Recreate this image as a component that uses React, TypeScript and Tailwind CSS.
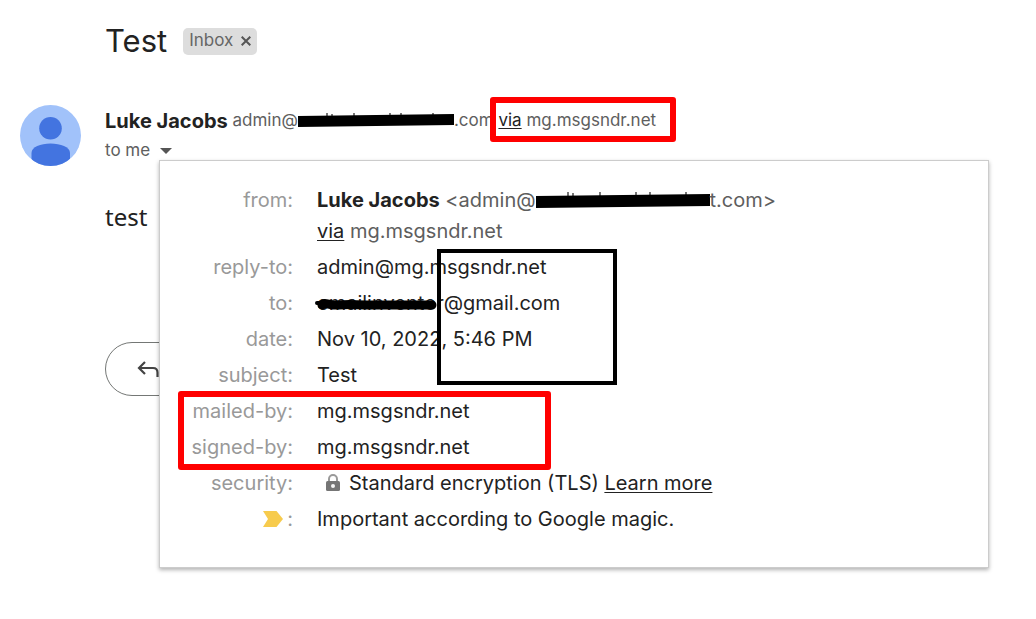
import type { ReactNode } from 'react';

const details: Array<{ label: string; value: ReactNode }> = [
  { label: 'reply-to:', value: 'admin@mg.msgsndr.net' },
  {
    label: 'to:',
    value: (
      <span className="relative">
        emailinventor@gmail.com
        <Marker className="absolute -left-0.5 top-1.5 h-4 w-[123px]">
          <path d="M2 6H14M6 8C30 6 60 8 118 7" strokeWidth="4" />
          <path d="M7 8C10 4 14 9 24 8S40 8 60 8S96 8 117 8" strokeWidth="9" />
        </Marker>
      </span>
    )
  },
  { label: 'date:', value: 'Nov 10, 2022, 5:46 PM' },
  { label: 'subject:', value: 'Test' },
  { label: 'mailed-by:', value: 'mg.msgsndr.net' },
  { label: 'signed-by:', value: 'mg.msgsndr.net' },
  {
    label: 'security:',
    value: (
      <span className="flex items-center">
        <LockIcon />
        <span>
          Standard encryption (TLS){' '}
          <a href="#learn-more" className="underline decoration-1 underline-offset-2">
            Learn more
          </a>
        </span>
      </span>
    )
  }
];

function Marker({ className, children }: { className: string; children: ReactNode }) {
  return (
    <svg className={className} fill="none" stroke="#000" strokeLinecap="round" aria-hidden="true">
      {children}
    </svg>
  );
}

function LockIcon() {
  return (
    <svg className="ml-2 mr-2 h-[18px] w-4 shrink-0" viewBox="0 0 16 18" aria-hidden="true">
      <path d="M4 8V5a4 4 0 0 1 8 0v3" fill="none" stroke="#9a9a9a" strokeWidth="2" />
      <rect x="1" y="7" width="14" height="10" rx="1.5" fill="#757575" />
      <circle cx="8" cy="12" r="2" fill="#f5f5f5" />
    </svg>
  );
}

function Avatar() {
  return (
    <svg className="size-[61px] shrink-0" viewBox="0 0 61 61" aria-hidden="true">
      <clipPath id="avatar-clip">
        <circle cx="30.5" cy="30.5" r="30.5" />
      </clipPath>
      <g clipPath="url(#avatar-clip)">
        <rect width="61" height="61" fill="#a1c2fa" />
        <circle cx="30.5" cy="23.3" r="11.3" fill="#4374e0" />
        <path d="M11.500 61V48c0-6 9-9.500 19-9.500s19.500 3.500 19.500 9.500v13z" fill="#4374e0" />
      </g>
    </svg>
  );
}

function Via() {
  return (
    <a href="#via" className="text-[#222] underline decoration-1 underline-offset-2">
      via
    </a>
  );
}

function DetailsPopup() {
  return (
    <section className="absolute left-[159px] right-[47px] top-40 h-[408px] border border-[#ccc] bg-white pt-6 shadow-[0_2px_4px_rgba(0,0,0,0.3)]">
      <dl className="grid grid-cols-[133px_1fr] gap-x-6 gap-y-1.5 text-xl leading-[30px] text-[#222]">
        <dt className="text-right text-[#999]">from:</dt>
        <dd className="text-[#5e5e5e]">
          <div className="flex items-center whitespace-pre">
            <b className="font-bold text-[#222]">Luke Jacobs</b>
            <span> &lt;admin@</span>
            <Marker className="h-6 w-[174px] shrink-0">
              <path
                d="M32 4V12M37 5V12M64 4V12M100 4V12M114 4V12M150 4V12"
                stroke="#777"
                strokeWidth="2"
                strokeLinecap="butt"
              />
              <path d="M0 8L174 6V18L0 20z" fill="#000" stroke="none" />
            </Marker>
            <span>t.com&gt;</span>
          </div>
          <div className="pt-px">
            <Via /> mg.msgsndr.net
          </div>
        </dd>
        {details.map((row) => (
          <div key={row.label} className="contents">
            <dt className="text-right text-[#999]">{row.label}</dt>
            <dd>{row.value}</dd>
          </div>
        ))}
        <dt className="flex items-center justify-end gap-1 text-[#999]">
          <svg className="h-4 w-5" viewBox="0 0 20 16" role="img" aria-label="Important">
            <path d="M0 0h13.500L20 8l-6.500 8H0l5-8z" fill="#f7cb4d" />
          </svg>
          :
        </dt>
        <dd>Important according to Google magic.</dd>
      </dl>
    </section>
  );
}

export default function App() {
  return (
    <main className="relative min-h-screen overflow-hidden bg-white pl-5 pt-5 font-['Inter',sans-serif] text-[#222]">
      <header className="flex items-center gap-4 pl-[85px]">
        <h1 className="text-[31px] leading-[42px]">Test</h1>
        <span className="flex h-[27px] items-center gap-2 rounded-[5px] bg-[#ddd] px-1.5 text-[17px] text-[#666]">
          Inbox
          <button type="button" aria-label="Remove label Inbox">
            <svg className="size-2.5" viewBox="0 0 10 10" stroke="#555" strokeWidth="2">
              <path d="M.7.700l8.600 8.600M9.300.700L.7 9.300" />
            </svg>
          </button>
        </span>
      </header>

      <div className="mt-[43px] flex gap-6">
        <Avatar />
        <div className="pt-px">
          <div className="flex h-[30px] items-center whitespace-pre text-[17px] text-[#5e5e5e]">
            <b className="text-xl font-bold text-[#222]">Luke Jacobs</b>
            <span> admin@</span>
            <Marker className="h-6 w-[156px] shrink-0">
              <path
                d="M29 4V12M34 5V12M56 4V12M92 4V12M103 4V12M135 4V12"
                stroke="#777"
                strokeWidth="2"
                strokeLinecap="butt"
              />
              <path d="M0 7L156 5V16L0 18z" fill="#000" stroke="none" />
            </Marker>
            <span>.com </span>
            <Via />
            <span> mg.msgsndr.net</span>
          </div>
          <button type="button" className="flex h-[30px] items-center gap-2.5 text-[17px] text-[#5e5e5e]">
            to me
            <svg className="h-1.5 w-3" viewBox="0 0 12 6" fill="#555" aria-hidden="true">
              <path d="M0 0h12L6 6z" />
            </svg>
          </button>
        </div>
      </div>

      <p className="mt-9 pl-[85px] font-['Noto_Sans',sans-serif] text-2xl leading-[30px]">test</p>

      <button
        type="button"
        className="ml-[85px] mt-[110px] flex h-[54px] w-40 items-center rounded-full border border-[#747775] pl-[31px]"
        aria-label="Reply"
      >
        <svg className="h-5 w-6" viewBox="0 0 24 20" fill="none" stroke="#444" strokeWidth="2.2">
          <path d="M8 3L2 9l6 6M2 9h14q4.500 0 4.500 4.500V18" />
        </svg>
      </button>

      <DetailsPopup />

      {/* callouts drawn over the message */}
      <div className="absolute left-[490px] top-[97px] h-[45px] w-[186px] rounded-[3px] border-[6px] border-[#f00]" />
      <div className="absolute left-[437px] top-[249px] h-[136px] w-[180px] border-4 border-black" />
      <div className="absolute left-[178px] top-[391px] h-[79px] w-[373px] rounded-[3px] border-[6px] border-[#f00]" />
    </main>
  );
}
